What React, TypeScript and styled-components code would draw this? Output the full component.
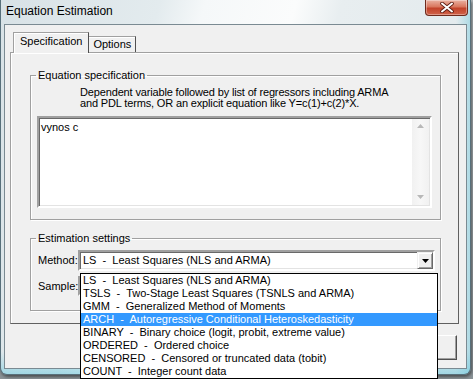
import React from "react";
import styled, { createGlobalStyle } from "styled-components";

const GlobalStyle = createGlobalStyle`
  html, body { margin: 0; padding: 0; }
  body {
    width: 473px;
    height: 379px;
    overflow: hidden;
    background: #7f878b;
    font-family: "Liberation Sans", Arial, sans-serif;
    font-size: 11px;
    color: #000;
  }
  * { box-sizing: border-box; }
`;

const Screen = styled.div`
  width: 473px;
  height: 379px;
  background: linear-gradient(180deg, #aab2b6 0%, #8a9296 100%);
`;

const Window = styled.div`
  width: 471px;
  height: 375px;
  display: flex;
  flex-direction: column;
  border: 1px solid #58707b;
  border-top: none;
  border-radius: 0 0 7px 7px;
  background:
    linear-gradient(180deg, rgba(255,255,255,0) 94%, rgba(110,200,220,0.55) 100%),
    linear-gradient(90deg, rgba(255,255,255,0) 97%, rgba(110,200,220,0.45) 100%),
    linear-gradient(105deg, #d8e2e6 0%, #e3ebee 28%, #f5f8f9 36%, #fbfcfc 52%, #e8eef0 60%, #e0e8eb 100%);
  box-shadow: 1px 2px 3px rgba(0, 0, 0, 0.45);
`;

const TitleBar = styled.div`
  height: 24px;
  display: flex;
  justify-content: space-between;
  align-items: flex-start;
  padding-left: 5px;
`;

const Title = styled.div`
  font-family: "Liberation Sans", Arial, sans-serif;
  font-size: 12px;
  line-height: 23px;
  color: #000;
`;

const CloseButton = styled.div`
  width: 43px;
  height: 16px;
  margin-right: 2px;
  display: flex;
  align-items: center;
  justify-content: center;
  border: 1px solid #6e2a1c;
  border-top: none;
  border-radius: 0 0 4px 4px;
  background: linear-gradient(180deg, #eab2a2 0%, #d9775e 45%, #c2432a 55%, #d0634a 100%);
  box-shadow: inset 0 0 0 1px rgba(255, 255, 255, 0.35);
`;

const Client = styled.div`
  margin: 0 3px 0 3px;
  height: 345px;
  border: 1px solid #7a8a92;
  background: #f0f0f0;
  padding: 7px 7px 0 5px;
  display: flex;
  flex-direction: column;
`;

const TabStrip = styled.div`
  height: 20px;
  display: flex;
  align-items: flex-end;
  padding-left: 3px;
  position: relative;
  z-index: 1;
`;

const Tab = styled.div<{ $active?: boolean }>`
  height: ${(p) => (p.$active ? "21px" : "16px")};
  margin-bottom: ${(p) => (p.$active ? "-1px" : "0")};
  padding: ${(p) => (p.$active ? "2px 6px 0 6px" : "1px 4px 0 4px")};
  background: #f0f0f0;
  border-top: 1px solid #a0a0a0;
  border-left: ${(p) => (p.$active ? "1px solid #a0a0a0" : "none")};
  border-right: 1px solid #505050;
  box-shadow: ${(p) => (p.$active ? "inset 1px 1px 0 #fff" : "inset 0 1px 0 #fff")};
  line-height: 13px;
  white-space: nowrap;
`;

const TabPanel = styled.div`
  height: 272px;
  border: 1px solid #a0a0a0;
  border-right-color: #606060;
  border-bottom-color: #606060;
  box-shadow: inset 1px 1px 0 #fff;
  padding: 16px 17px 0 19px;
  display: flex;
  flex-direction: column;
`;

const Group = styled.fieldset<{ $h: number; $mt?: number }>`
  margin: ${(p) => p.$mt ?? 0}px 0 0 0;
  height: ${(p) => p.$h}px;
  padding: 0 0 0 5px;
  min-width: 0;
  border: 1px solid #a0a0a0;
  box-shadow: 1px 1px 0 #fff, inset 1px 1px 0 #fff;
  display: block;
`;

const Legend = styled.legend`
  padding: 0 2px;
  line-height: 13px;
  font-size: 11px;
`;

const Description = styled.div`
  margin: 5px 0 0 44px;
  line-height: 11px;
  letter-spacing: -0.15px;
`;

const EditBox = styled.div`
  margin: 7px 0 0 1px;
  width: 395px;
  height: 92px;
  display: flex;
  background: #fff;
  border: 2px solid;
  border-color: #a0a0a0 #fff #fff #a0a0a0;
  box-shadow: inset 1px 1px 0 #696969, inset -1px -1px 0 #e3e3e3;
`;

const EditText = styled.div`
  flex: 1;
  padding: 3px 0 0 2px;
  line-height: 13px;
`;

const ScrollBar = styled.div`
  width: 17px;
  margin: 1px 1px 1px 0;
  background: linear-gradient(90deg, #f1f1f1 0%, #f7f7f7 50%, #f1f1f1 100%);
  display: flex;
  flex-direction: column;
  justify-content: space-between;
  align-items: center;
  padding: 5px 0 6px 0;
`;

const FieldRow = styled.div<{ $mt?: number }>`
  display: flex;
  align-items: center;
  margin-top: ${(p) => p.$mt ?? 0}px;
  padding-left: 2px;
  position: relative;
`;

const FieldLabel = styled.div`
  width: 40px;
  line-height: 13px;
`;

const Combo = styled.div`
  position: relative;
  width: 357px;
  height: 21px;
  background: #fff;
  border: 2px solid;
  border-color: #a0a0a0 #fff #fff #a0a0a0;
  box-shadow: inset 1px 1px 0 #696969, inset -1px -1px 0 #e3e3e3;
  display: flex;
  align-items: center;
  padding-left: 3px;
  white-space: pre;
  font-size: 11px;
`;

const ComboText = styled.div`
  flex: 1;
  line-height: 13px;
`;

const DropButton = styled.div`
  width: 16px;
  height: 17px;
  background: #f0f0f0;
  border: 1px solid;
  border-color: #f0f0f0 #696969 #696969 #f0f0f0;
  box-shadow: inset 1px 1px 0 #fff, inset -1px -1px 0 #a0a0a0;
  display: flex;
  align-items: center;
  justify-content: center;
`;

const EditField = styled.div`
  width: 357px;
  height: 20px;
  background: #fff;
  border: 2px solid;
  border-color: #a0a0a0 #fff #fff #a0a0a0;
`;

const DropList = styled.div`
  position: absolute;
  top: 21px;
  left: 0;
  width: 358px;
  background: #fff;
  border: 1px solid #000;
  z-index: 5;
`;

const ListItem = styled.div<{ $selected?: boolean }>`
  height: 13px;
  line-height: 13px;
  padding-left: 2px;
  white-space: pre;
  font-size: 11px;
  background: ${(p) => (p.$selected ? "#3399ff" : "#fff")};
  color: ${(p) => (p.$selected ? "#fff" : "#000")};
`;

const ButtonRow = styled.div`
  display: flex;
  justify-content: flex-end;
  gap: 6px;
  margin-top: 11px;
  padding-right: 2px;
`;

const DlgButton = styled.div`
  width: 80px;
  height: 25px;
  display: flex;
  align-items: center;
  justify-content: center;
  background: #f0f0f0;
  border: 1px solid;
  border-color: #fff #505050 #505050 #fff;
  box-shadow: inset -1px -1px 0 #a0a0a0;
`;

const methods = [
  "LS  -  Least Squares (NLS and ARMA)",
  "TSLS  -  Two-Stage Least Squares (TSNLS and ARMA)",
  "GMM  -  Generalized Method of Moments",
  "ARCH  -  Autoregressive Conditional Heteroskedasticity",
  "BINARY  -  Binary choice (logit, probit, extreme value)",
  "ORDERED  -  Ordered choice",
  "CENSORED  -  Censored or truncated data (tobit)",
  "COUNT  -  Integer count data",
];

function CloseGlyph() {
  return (
    <svg width="14" height="11" viewBox="0 0 14 11">
      <path d="M2 1.5 L12 9.5 M12 1.5 L2 9.5" stroke="#5a1a10" strokeWidth="3.6" strokeLinecap="round" />
      <path d="M2 1.5 L12 9.5 M12 1.5 L2 9.5" stroke="#fff" strokeWidth="2" strokeLinecap="round" />
    </svg>
  );
}

function Arrow({ up, color }: { up?: boolean; color: string }) {
  return (
    <svg width="7" height="4" viewBox="0 0 7 4">
      <path d={up ? "M0 4 L3.5 0 L7 4 Z" : "M0 0 L7 0 L3.5 4 Z"} fill={color} />
    </svg>
  );
}

export default function App() {
  return (
    <Screen>
      <GlobalStyle />
      <Window>
        <TitleBar>
          <Title>Equation Estimation</Title>
          <CloseButton>
            <CloseGlyph />
          </CloseButton>
        </TitleBar>
        <Client>
          <TabStrip>
            <Tab $active>Specification</Tab>
            <Tab>Options</Tab>
          </TabStrip>
          <TabPanel>
            <Group $h={151}>
              <Legend>Equation specification</Legend>
              <Description>
                Dependent variable followed by list of regressors including ARMA
                <br />
                and PDL terms, OR an explicit equation like Y=c(1)+c(2)*X.
              </Description>
              <EditBox>
                <EditText>vynos c</EditText>
                <ScrollBar>
                  <Arrow up color="#b8b8b8" />
                  <Arrow color="#b8b8b8" />
                </ScrollBar>
              </EditBox>
            </Group>
            <Group $h={79} $mt={12}>
              <Legend>Estimation settings</Legend>
              <FieldRow $mt={5}>
                <FieldLabel>Method:</FieldLabel>
                <Combo>
                  <ComboText>{methods[0]}</ComboText>
                  <DropButton>
                    <Arrow color="#000" />
                  </DropButton>
                  <DropList>
                    {methods.map((m, i) => (
                      <ListItem key={m} $selected={i === 3}>
                        {m}
                      </ListItem>
                    ))}
                  </DropList>
                </Combo>
              </FieldRow>
              <FieldRow $mt={5}>
                <FieldLabel>Sample:</FieldLabel>
                <EditField />
              </FieldRow>
            </Group>
          </TabPanel>
          <ButtonRow>
            <DlgButton>OK</DlgButton>
            <DlgButton>Cancel</DlgButton>
          </ButtonRow>
        </Client>
      </Window>
    </Screen>
  );
}
